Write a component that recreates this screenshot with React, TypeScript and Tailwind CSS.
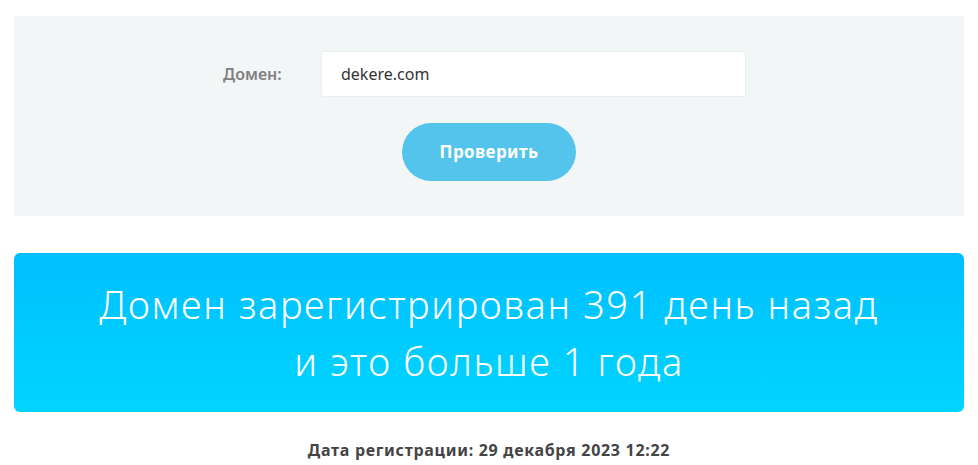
export default function App() {
  return (
    <div className="min-h-[465px] bg-white px-[14px] pt-4 font-['Noto_Sans',sans-serif] text-[#444]">
      {/* Form panel */}
      <div className="flex h-[200px] flex-col items-center bg-[#f3f6f7] pt-[35px]">
        <div className="flex items-center gap-[39px] pr-[9px]">
          <label className="w-[59px] text-[16px] font-semibold text-[#808080]">Домен:</label>
          <input
            defaultValue="dekere.com"
            className="h-[46px] w-[425px] rounded-[2px] border border-[#eceeef] bg-white px-[19px] text-[16px] text-[#333] outline-none"
          />
        </div>
        <button className="mt-[26px] h-[58px] w-[174px] rounded-full bg-[#54c4ec] text-[17px] font-bold tracking-[0.4px] text-white">
          Проверить
        </button>
      </div>

      {/* Result */}
      <div className="mt-[37px] flex h-[159px] flex-col items-center justify-center rounded-[6px] bg-gradient-to-b from-[#00bfff] to-[#00d5ff] text-center text-[38px] font-light leading-[57px] tracking-[1.6px] text-white">
        <p>Домен зарегистрирован 391 день назад</p>
        <p>и это больше 1 года</p>
      </div>

      <p className="mt-[26px] text-center text-[16px] font-bold tracking-[0.7px] text-[#444]">
        Дата регистрации: 29 декабря 2023 12:22
      </p>
    </div>
  );
}
